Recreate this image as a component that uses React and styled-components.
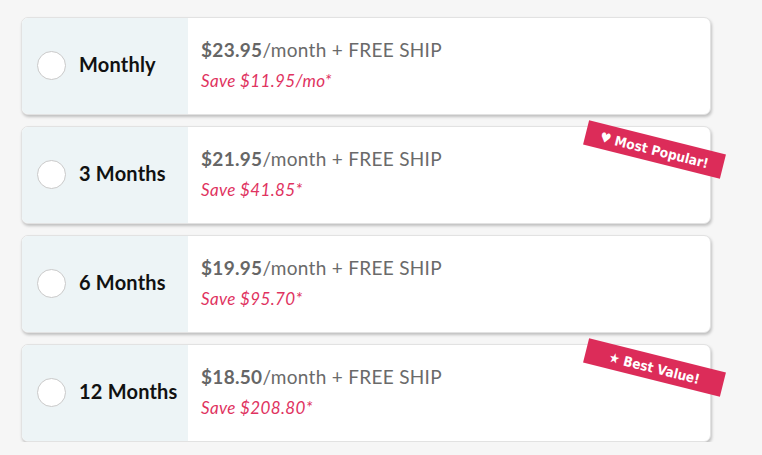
import React, { useState } from 'react';
import styled, { createGlobalStyle } from 'styled-components';

const GlobalStyle = createGlobalStyle`
  html, body {
    margin: 0;
    padding: 0;
    background: #f6f6f6;
    font-family: Lato, "Open Sans", sans-serif;
  }
`;

const Page = styled.div`
  display: flex;
  flex-direction: column;
  gap: 11px;
  width: 690px;
  padding: 17px 0 0 21px;
`;

const Card = styled.label`
  position: relative;
  display: flex;
  height: 98px;
  box-sizing: border-box;
  background: #fff;
  border: 1px solid #e2e2e2;
  border-radius: 7px;
  box-shadow: 1px 2px 3px rgba(0, 0, 0, 0.22);
  cursor: pointer;
`;

const Side = styled.div`
  display: flex;
  align-items: center;
  gap: 13px;
  width: 166px;
  flex-shrink: 0;
  padding: 0 0 4px 15px;
  box-sizing: border-box;
  background: #edf4f6;
  border-radius: 6px 0 0 6px;
`;

const Radio = styled.span`
  width: 29px;
  height: 29px;
  margin-top: 3px;
  box-sizing: border-box;
  border-radius: 50%;
  border: 1px solid #c9c9c9;
  background: ${(p) => (p.checked ? 'radial-gradient(circle, #e0335f 0 7px, #fff 8px)' : '#fff')};
`;

const Plan = styled.span`
  font-size: 20px;
  font-weight: 700;
  letter-spacing: 0.2px;
  color: #111;
`;

const Info = styled.div`
  display: flex;
  flex-direction: column;
  justify-content: center;
  gap: 9px;
  padding-left: 13px;
  padding-bottom: 3px;
`;

const Price = styled.div`
  font-size: 19px;
  letter-spacing: 0.3px;
  color: #6a6a6a;

  b {
    font-weight: 700;
    color: #666;
  }
`;

const Save = styled.div`
  font-size: 17px;
  font-style: italic;
  letter-spacing: 0.35px;
  color: #e0335f;
`;

const Badge = styled.div`
  position: absolute;
  top: 10px;
  right: -15px;
  width: 141px;
  height: 25px;
  display: flex;
  align-items: center;
  justify-content: center;
  background: #dc2c59;
  color: #fff;
  font-family: "DejaVu Sans Condensed", "DejaVu Sans", sans-serif;
  font-size: 13.5px;
  font-weight: 700;
  transform: rotate(14deg);
`;

const plans = [
  { name: 'Monthly', price: '$23.95', save: 'Save $11.95/mo*' },
  { name: '3 Months', price: '$21.95', save: 'Save $41.85*', badge: '♥ Most Popular!' },
  { name: '6 Months', price: '$19.95', save: 'Save $95.70*' },
  { name: '12 Months', price: '$18.50', save: 'Save $208.80*', badge: '★ Best Value!' },
];

const App = () => {
  const [selected, setSelected] = useState(null);

  return (
    <>
      <GlobalStyle />
      <Page>
        {plans.map((plan, i) => (
          <Card key={plan.name} onClick={() => setSelected(i)}>
            <Side>
              <Radio checked={selected === i} />
              <Plan>{plan.name}</Plan>
            </Side>
            <Info>
              <Price>
                <b>{plan.price}</b>/month + FREE SHIP
              </Price>
              <Save>{plan.save}</Save>
            </Info>
            {plan.badge && <Badge>{plan.badge}</Badge>}
          </Card>
        ))}
      </Page>
    </>
  );
};

export default App;
